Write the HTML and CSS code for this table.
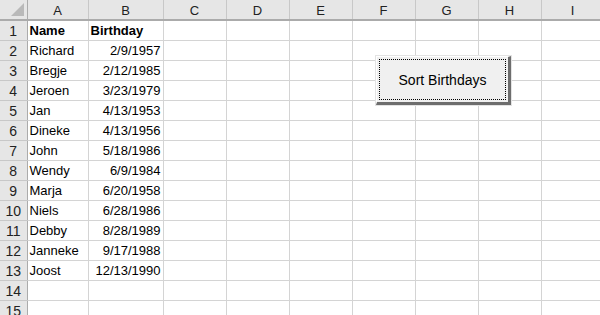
FILE: index.html
```html
<!DOCTYPE html>
<html lang="en">
<head>
    <meta charset="UTF-8">
    <title>Sort Birthdays</title>
    <link rel="stylesheet" href="styles.css">
</head>
<body>
    <div class="sheet">
        <table class="grid">
            <colgroup>
                <col class="col-rh">
                <col class="col-a">
                <col class="col-b">
                <col class="col-n">
                <col class="col-n">
                <col class="col-n">
                <col class="col-n">
                <col class="col-n">
                <col class="col-n">
                <col class="col-n">
            </colgroup>
            <thead>
                <tr>
                    <th class="corner">
                        <svg width="13" height="13" viewBox="0 0 13 13"><polygon points="13,0 13,13 0,13" fill="#b9b9b9"/></svg>
                    </th>
                    <th>A</th><th>B</th><th>C</th><th>D</th><th>E</th><th>F</th><th>G</th><th>H</th><th>I</th>
                </tr>
            </thead>
            <tbody>
                <tr><th>1</th><td class="bold">Name</td><td class="bold">Birthday</td><td></td><td></td><td></td><td></td><td></td><td></td><td></td></tr>
                <tr><th>2</th><td>Richard</td><td class="num">2/9/1957</td><td></td><td></td><td></td><td></td><td></td><td></td><td></td></tr>
                <tr><th>3</th><td>Bregje</td><td class="num">2/12/1985</td><td></td><td></td><td></td><td></td><td></td><td></td><td></td></tr>
                <tr><th>4</th><td>Jeroen</td><td class="num">3/23/1979</td><td></td><td></td><td></td><td></td><td></td><td></td><td></td></tr>
                <tr><th>5</th><td>Jan</td><td class="num">4/13/1953</td><td></td><td></td><td></td><td></td><td></td><td></td><td></td></tr>
                <tr><th>6</th><td>Dineke</td><td class="num">4/13/1956</td><td></td><td></td><td></td><td></td><td></td><td></td><td></td></tr>
                <tr><th>7</th><td>John</td><td class="num">5/18/1986</td><td></td><td></td><td></td><td></td><td></td><td></td><td></td></tr>
                <tr><th>8</th><td>Wendy</td><td class="num">6/9/1984</td><td></td><td></td><td></td><td></td><td></td><td></td><td></td></tr>
                <tr><th>9</th><td>Marja</td><td class="num">6/20/1958</td><td></td><td></td><td></td><td></td><td></td><td></td><td></td></tr>
                <tr><th>10</th><td>Niels</td><td class="num">6/28/1986</td><td></td><td></td><td></td><td></td><td></td><td></td><td></td></tr>
                <tr><th>11</th><td>Debby</td><td class="num">8/28/1989</td><td></td><td></td><td></td><td></td><td></td><td></td><td></td></tr>
                <tr><th>12</th><td>Janneke</td><td class="num">9/17/1988</td><td></td><td></td><td></td><td></td><td></td><td></td><td></td></tr>
                <tr><th>13</th><td>Joost</td><td class="num">12/13/1990</td><td></td><td></td><td></td><td></td><td></td><td></td><td></td></tr>
                <tr><th>14</th><td></td><td></td><td></td><td></td><td></td><td></td><td></td><td></td><td></td></tr>
                <tr><th>15</th><td></td><td></td><td></td><td></td><td></td><td></td><td></td><td></td><td></td></tr>
            </tbody>
        </table>

        <button class="sort-btn"><span class="focus">Sort Birthdays</span></button>
    </div>
</body>
</html>
```

FILE: styles.css
```css
body {
    margin: 0;
    padding: 0;
    background-color: white;
    font-family: "Liberation Sans", Arial, sans-serif;
    overflow: hidden;
}
.sheet {
    position: relative;
    width: 600px;
    height: 315px;
    overflow: hidden;
}
.grid {
    border-collapse: collapse;
    table-layout: fixed;
    width: 604px;
    font-size: 13px;
    color: #000;
}
.col-rh { width: 27px; }
.col-a { width: 61px; }
.col-b { width: 75px; }
.col-n { width: 63px; }
.grid tr {
    height: 20px;
}
.grid td {
    border-right: 1px solid #d4d4d4;
    border-bottom: 1px solid #d4d4d4;
    padding: 1px 2px 0 2px;
    height: 19px;
    box-sizing: border-box;
    white-space: nowrap;
    overflow: hidden;
}
.grid th {
    background-color: #e6e6e6;
    font-weight: normal;
    color: #222;
    padding: 1px 0 0 0;
    height: 19px;
    box-sizing: border-box;
}
.grid thead th {
    border-right: 1px solid #c8c8c8;
    border-bottom: 2px solid #ababab;
}
.grid tbody th {
    border-bottom: 1px solid #c8c8c8;
    border-right: 1px solid #ababab;
    font-size: 14px;
}
.grid thead th.corner {
    position: relative;
    border-right: 1px solid #ababab;
}
.corner svg {
    position: absolute;
    right: 3px;
    bottom: 3px;
}
.bold {
    font-weight: bold;
}
.num {
    text-align: right;
}
.sort-btn {
    position: absolute;
    left: 376px;
    top: 56px;
    width: 135px;
    height: 49px;
    padding: 2px;
    box-sizing: border-box;
    background-color: #f0f0f0;
    border: none;
    border-top: 1px solid #fff;
    border-left: 1px solid #fff;
    border-right: 3px solid #6d6d6d;
    border-bottom: 3px solid #6d6d6d;
    outline: 1px solid #e3e3e3;
    font-family: "Liberation Sans", Arial, sans-serif;
    font-size: 14px;
    color: #000;
}
.focus {
    display: flex;
    align-items: center;
    justify-content: center;
    height: 100%;
    border: 1px dotted #000;
    box-sizing: border-box;
}
```
